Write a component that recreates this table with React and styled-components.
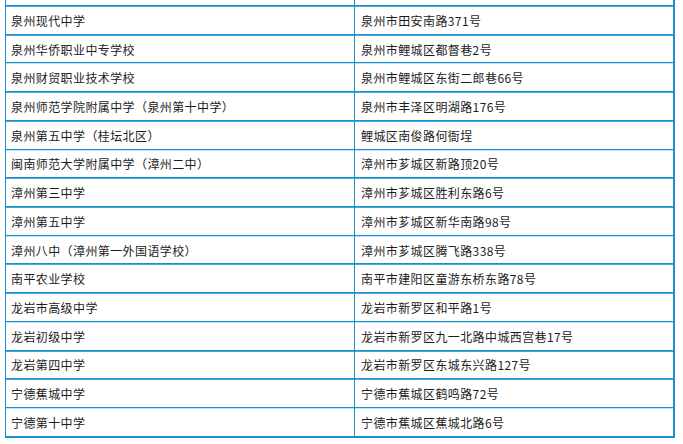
import React from 'react';
import styled, { createGlobalStyle } from 'styled-components';

const GlobalStyle = createGlobalStyle`
  html, body {
    margin: 0;
    padding: 0;
    background: #ffffff;
  }
  body {
    font-family: "Noto Sans CJK SC", "Liberation Sans", sans-serif;
  }
`;

const Page = styled.div`
  width: 683px;
  height: 444px;
  overflow: hidden;
  padding-left: 5px;
  box-sizing: border-box;
`;

const Table = styled.div`
  width: 670px;
  border-left: 1px solid #1a8fcc;
  border-right: 2px solid #1a8fcc;
  border-bottom: 2px solid #1a8fcc;
  box-sizing: border-box;
`;

const Stub = styled.div`
  display: grid;
  grid-template-columns: 349px 1fr;
  height: 5px;
`;

const Row = styled.div`
  display: grid;
  grid-template-columns: 349px 1fr;
  height: 28.73px;
  box-sizing: border-box;
  border-top: 1px solid #1790cf;
  box-shadow: inset 0 1px 0 ${({ $soft }) => ($soft ? '#bfe3f5' : '#4aa8dc')};
`;

const Cell = styled.div`
  display: flex;
  align-items: center;
  padding-top: 1px;
  font-size: 12px;
  letter-spacing: 0.4px;
  color: #1c1c1c;
  white-space: nowrap;
  border-right: ${({ $first }) => ($first ? '1px solid #1a8fcc' : 'none')};
  padding-left: ${({ $first }) => ($first ? '5px' : '6px')};
`;

const rows = [
  ['泉州现代中学', '泉州市田安南路371号'],
  ['泉州华侨职业中专学校', '泉州市鲤城区都督巷2号'],
  ['泉州财贸职业技术学校', '泉州市鲤城区东街二郎巷66号'],
  ['泉州师范学院附属中学（泉州第十中学）', '泉州市丰泽区明湖路176号'],
  ['泉州第五中学（桂坛北区）', '鲤城区南俊路何衙埕'],
  ['闽南师范大学附属中学（漳州二中）', '漳州市芗城区新路顶20号'],
  ['漳州第三中学', '漳州市芗城区胜利东路6号'],
  ['漳州第五中学', '漳州市芗城区新华南路98号'],
  ['漳州八中（漳州第一外国语学校）', '漳州市芗城区腾飞路338号'],
  ['南平农业学校', '南平市建阳区童游东桥东路78号'],
  ['龙岩市高级中学', '龙岩市新罗区和平路1号'],
  ['龙岩初级中学', '龙岩市新罗区九一北路中城西宫巷17号'],
  ['龙岩第四中学', '龙岩市新罗区东城东兴路127号'],
  ['宁德蕉城中学', '宁德市蕉城区鹤鸣路72号'],
  ['宁德第十中学', '宁德市蕉城区蕉城北路6号'],
];

export default function App() {
  return (
    <>
      <GlobalStyle />
      <Page>
        <Table>
          <Stub>
            <Cell $first />
            <Cell />
          </Stub>
          {rows.map(([school, address], i) => (
            <Row key={school} $soft={i % 3 === 2}>
              <Cell $first>{school}</Cell>
              <Cell>{address}</Cell>
            </Row>
          ))}
        </Table>
      </Page>
    </>
  );
}
